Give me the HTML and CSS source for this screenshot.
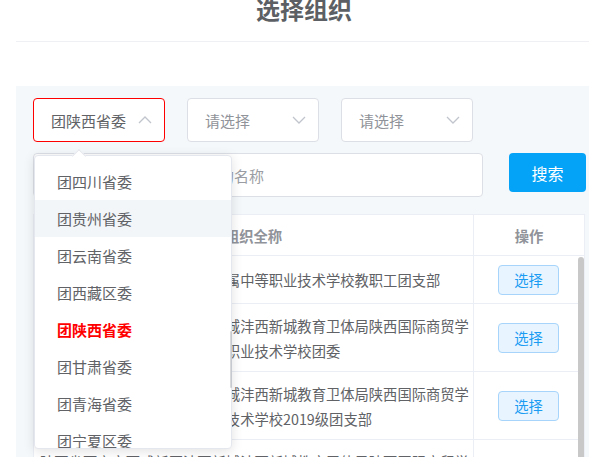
FILE: index.html
```html
<!DOCTYPE html>
<html lang="zh-CN">
<head>
<meta charset="utf-8">
<title>选择组织</title>
<link rel="stylesheet" href="styles.css">
</head>
<body>
<div class="page">
  <h1 class="title">选择组织</h1>
  <div class="panel">
    <div class="filters">
      <div class="select-wrap">
        <div class="select select-active">
          <span class="select-value">团陕西省委</span>
          <svg class="chevron" viewBox="0 0 14 8" width="14" height="8"><path d="M1 7 L7 1 L13 7" fill="none" stroke="#c0c4cc" stroke-width="1.3"/></svg>
        </div>
        <div class="dropdown">
          <div class="dropdown-arrow"></div>
          <ul class="dropdown-list">
            <li class="dropdown-item">团四川省委</li>
            <li class="dropdown-item is-hover">团贵州省委</li>
            <li class="dropdown-item">团云南省委</li>
            <li class="dropdown-item">团西藏区委</li>
            <li class="dropdown-item is-selected">团陕西省委</li>
            <li class="dropdown-item">团甘肃省委</li>
            <li class="dropdown-item">团青海省委</li>
            <li class="dropdown-item">团宁夏区委</li>
            <li class="dropdown-item">团新疆区委</li>
          </ul>
          <div class="dropdown-thumb"></div>
        </div>
      </div>
      <div class="select-wrap">
        <div class="select">
          <span class="select-placeholder">请选择</span>
          <svg class="chevron" viewBox="0 0 14 8" width="14" height="8"><path d="M1 1 L7 7 L13 1" fill="none" stroke="#c0c4cc" stroke-width="1.3"/></svg>
        </div>
      </div>
      <div class="select-wrap">
        <div class="select">
          <span class="select-placeholder">请选择</span>
          <svg class="chevron" viewBox="0 0 14 8" width="14" height="8"><path d="M1 1 L7 7 L13 1" fill="none" stroke="#c0c4cc" stroke-width="1.3"/></svg>
        </div>
      </div>
    </div>

    <div class="search-row">
      <div class="search-input"><span class="search-placeholder">请输入需要查询的团组织的名称</span></div>
      <button class="search-btn">搜索</button>
    </div>

    <div class="table">
      <div class="thead">
        <div class="th th-name">组织全称</div>
        <div class="th th-op">操作</div>
      </div>
      <div class="tbody">
        <div class="tr">
          <div class="td td-name">西安市沣西新城教育卫体局附属中等职业技术学校教职工团支部</div>
          <div class="td td-op"><button class="pick-btn">选择</button></div>
        </div>
        <div class="tr">
          <div class="td td-name">陕西省西安市西咸新区沣西新城沣西新城教育卫体局陕西国际商贸学院附属陕西省西安市西咸新区职业技术学校团委</div>
          <div class="td td-op"><button class="pick-btn">选择</button></div>
        </div>
        <div class="tr">
          <div class="td td-name">陕西省西安市西咸新区沣西新城沣西新城教育卫体局陕西国际商贸学校附属陕西西咸新区中等职业技术学校2019级团支部</div>
          <div class="td td-op"><button class="pick-btn">选择</button></div>
        </div>
        <div class="tr">
          <div class="td td-name">陕西省西安市西咸新区沣西新城沣西新城教育卫体局陕西国际商贸学院附属中等职业技术学校团总支</div>
          <div class="td td-op"><button class="pick-btn">选择</button></div>
        </div>
        <div class="tr">
          <div class="td td-name">陕西省西安市西咸新区沣西新城沣西新城教育卫体局陕西国际商贸学院附属中等职业技术学校2020级团支部</div>
          <div class="td td-op"><button class="pick-btn">选择</button></div>
        </div>
        <div class="scroll-thumb"></div>
      </div>
    </div>
  </div>
</div>
</body>
</html>
```

FILE: styles.css
```css
html, body {
  margin: 0;
  padding: 0;
  overflow: hidden;
  background: #ffffff;
  font-family: "Noto Sans CJK SC", "Noto Sans", sans-serif;
}

.page {
  margin-left: 16px;
  width: 576px;
}

.title {
  margin: -3px 0 0 0;
  padding-bottom: 20px;
  border-bottom: 1px solid #eef0f3;
  text-align: center;
  font-size: 24px;
  line-height: 24px;
  font-weight: bold;
  color: #5c5f64;
}

.panel {
  margin-top: 44px;
  background: #f5f8fa;
  padding: 12px 0 40px 17px;
}

/* selects */
.filters {
  display: flex;
  gap: 22px;
}

.select-wrap {
  position: relative;
}

.select {
  box-sizing: border-box;
  width: 132px;
  height: 44px;
  border: 1px solid #dcdfe6;
  border-radius: 4px;
  background: #ffffff;
  display: flex;
  align-items: center;
  justify-content: space-between;
  padding: 0 12px 0 17px;
  font-size: 15px;
}

.select-active {
  border-color: #ff0000;
}

.select-value {
  color: #606266;
}

.select-placeholder {
  color: #909399;
}

.chevron {
  display: block;
  flex: none;
}

/* dropdown */
.dropdown {
  position: absolute;
  z-index: 10;
  left: 1px;
  top: 57px;
  box-sizing: border-box;
  width: 198px;
  height: 294px;
  background: #ffffff;
  border: 1px solid #e4e7ed;
  border-radius: 4px;
  box-shadow: 0 2px 12px 0 rgba(0, 0, 0, 0.12);
}

.dropdown-arrow {
  position: absolute;
  left: 39px;
  top: -5px;
  width: 9px;
  height: 9px;
  background: #ffffff;
  border-top: 1px solid #e4e7ed;
  border-left: 1px solid #e4e7ed;
  transform: rotate(45deg);
}

.dropdown-list {
  list-style: none;
  margin: 0;
  padding: 7px 0 0 0;
  height: 100%;
  box-sizing: border-box;
  overflow: hidden;
  border-radius: 4px;
}

.dropdown-item {
  height: 37px;
  line-height: 37px;
  padding: 0 22px;
  font-size: 15px;
  color: #606266;
}

.dropdown-item.is-hover {
  background: #f3f6f9;
}

.dropdown-item.is-selected {
  color: #ff0000;
  font-weight: bold;
}

.dropdown-thumb {
  position: absolute;
  right: -1px;
  top: 175px;
  width: 2px;
  height: 57px;
  background: rgba(144, 147, 153, 0.35);
  border-radius: 1px;
}

/* search */
.search-row {
  margin-top: 11px;
  display: flex;
  align-items: flex-start;
  gap: 26px;
}

.search-input {
  box-sizing: border-box;
  width: 450px;
  height: 44px;
  border: 1px solid #dcdfe6;
  border-radius: 4px;
  background: #ffffff;
  display: flex;
  align-items: center;
  padding-left: 20px;
  font-size: 15px;
  white-space: nowrap;
  overflow: hidden;
}

.search-placeholder {
  color: #9a9da3;
}

.search-btn {
  width: 77px;
  height: 39px;
  border: none;
  border-radius: 4px;
  background: #05a3f7;
  color: #ffffff;
  font-family: inherit;
  font-size: 16px;
  padding: 0;
}

/* table */
.table {
  margin-top: 17px;
  box-sizing: border-box;
  width: 552px;
  border: 1px solid #ebeef5;
  background: #ffffff;
}

.thead {
  display: grid;
  grid-template-columns: 440px 1fr;
  border-bottom: 1px solid #ebeef5;
}

.th {
  box-sizing: border-box;
  height: 40px;
  display: flex;
  align-items: center;
  justify-content: center;
  font-size: 14.3px;
  font-weight: bold;
  color: #909399;
}

.th-name {
  border-right: 1px solid #ebeef5;
}

.tbody {
  position: relative;
  height: 360px;
  overflow: hidden;
  padding-right: 6px;
}

.scroll-thumb {
  position: absolute;
  right: 0;
  top: 1px;
  width: 6px;
  height: 260px;
  background: #c8c8c8;
  border-radius: 3px;
}

.tr {
  display: grid;
  grid-template-columns: 440px 1fr;
  border-bottom: 1px solid #ebeef5;
}

.td {
  box-sizing: border-box;
  padding: 8.5px 0;
  display: flex;
  align-items: center;
  font-size: 14.3px;
  line-height: 25px;
  color: #606266;
}

.td-name {
  padding-left: 6px;
  border-right: 1px solid #ebeef5;
}

.td-op {
  justify-content: center;
  padding-left: 5px;
}

.pick-btn {
  box-sizing: border-box;
  width: 61px;
  height: 30px;
  border: 1px solid #a6d4fb;
  border-radius: 4px;
  background: #e8f4ff;
  color: #1a9cf2;
  font-family: inherit;
  font-size: 14.3px;
  padding: 0;
}
```
